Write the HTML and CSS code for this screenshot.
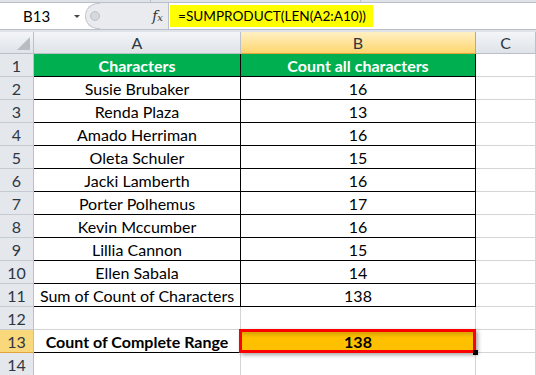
FILE: index.html
```html
<!DOCTYPE html>
<html lang="en">
<head>
    <meta charset="UTF-8">
    <meta name="viewport" content="width=device-width, initial-scale=1.0">
    <title>SUMPRODUCT LEN</title>
    <link rel="stylesheet" href="styles.css">
</head>
<body>
    <div class="top-strip">
        <span class="tick t1"></span>
        <span class="tick t2"></span>
    </div>

    <div class="formula-bar">
        <div class="name-box">
            <span class="name">B13</span>
            <span class="arrow"></span>
        </div>
        <div class="grip"><span class="knob"></span></div>
        <div class="fx-area"><span class="fx">f<small>x</small></span></div>
        <div class="input">
            <span class="formula">=SUMPRODUCT(LEN(A2:A10))</span>
        </div>
    </div>
    <div class="gap"></div>

    <div class="sheet">
        <!-- column headers -->
        <div class="corner"><span class="tri"></span></div>
        <div class="col-head">A</div>
        <div class="col-head active">B</div>
        <div class="col-head last">C</div>

        <div class="row-head">1</div>
        <div class="cell title box">Characters</div>
        <div class="cell title box">Count all characters</div>
        <div class="cell"></div>

        <div class="row-head">2</div>
        <div class="cell box">Susie Brubaker</div>
        <div class="cell box">16</div>
        <div class="cell"></div>

        <div class="row-head">3</div>
        <div class="cell box">Renda Plaza</div>
        <div class="cell box">13</div>
        <div class="cell"></div>

        <div class="row-head">4</div>
        <div class="cell box">Amado Herriman</div>
        <div class="cell box">16</div>
        <div class="cell"></div>

        <div class="row-head">5</div>
        <div class="cell box">Oleta Schuler</div>
        <div class="cell box">15</div>
        <div class="cell"></div>

        <div class="row-head">6</div>
        <div class="cell box">Jacki Lamberth</div>
        <div class="cell box">16</div>
        <div class="cell"></div>

        <div class="row-head">7</div>
        <div class="cell box">Porter Polhemus</div>
        <div class="cell box">17</div>
        <div class="cell"></div>

        <div class="row-head">8</div>
        <div class="cell box">Kevin Mccumber</div>
        <div class="cell box">16</div>
        <div class="cell"></div>

        <div class="row-head">9</div>
        <div class="cell box">Lillia Cannon</div>
        <div class="cell box">15</div>
        <div class="cell"></div>

        <div class="row-head">10</div>
        <div class="cell box">Ellen Sabala</div>
        <div class="cell box">14</div>
        <div class="cell"></div>

        <div class="row-head">11</div>
        <div class="cell box">Sum of Count of Characters</div>
        <div class="cell box">138</div>
        <div class="cell"></div>

        <div class="row-head">12</div>
        <div class="cell"></div>
        <div class="cell"></div>
        <div class="cell"></div>

        <div class="row-head active">13</div>
        <div class="cell bold underline">Count of Complete Range</div>
        <div class="cell bold result">138<span class="selection"><span class="handle"></span></span></div>
        <div class="cell"></div>

        <div class="row-head">14</div>
        <div class="cell"></div>
        <div class="cell"></div>
        <div class="cell"></div>
    </div>
</body>
</html>
```

FILE: styles.css
```css
body {
    margin: 0;
    width: 536px;
    height: 375px;
    overflow: hidden;
    background: #ffffff;
    font-family: Lato, 'Open Sans', Arial, sans-serif;
    font-size: 15px;
    color: #000;
}

/* ribbon edge above the formula bar */
.top-strip {
    height: 2px;
    background: #dfe3e8;
    border-bottom: 1px solid #b9c0c9;
    position: relative;
}

.tick {
    position: absolute;
    top: 0;
    width: 1px;
    height: 3px;
    background: #b9c0c9;
}

.t1 { left: 150px; }
.t2 { left: 360px; }

.formula-bar {
    display: flex;
    height: 26px;
    background: #ffffff;
    border-bottom: 1px solid #b9c0c9;
}

.name-box {
    width: 85px;
    display: flex;
    align-items: center;
    background: #ffffff;
}

.name {
    margin-left: 23px;
    width: 51px;
}

.arrow {
    width: 0;
    height: 0;
    border-left: 3px solid transparent;
    border-right: 3px solid transparent;
    border-top: 3px solid #444;
}

.grip {
    width: 15px;
    background: #e9ebee;
    border: 1px solid #c3c8ce;
    border-right: none;
    border-radius: 13px 0 0 13px;
    display: flex;
    align-items: center;
    justify-content: center;
    box-sizing: border-box;
}

.knob {
    width: 8px;
    height: 8px;
    border-radius: 50%;
    background: #d5d9de;
    border: 1px solid #bcc2c9;
    margin-left: 3px;
}

.fx-area {
    width: 68px;
    background: #e9ebee;
    display: flex;
    align-items: center;
    justify-content: flex-end;
    border-right: 1px solid #b9c0c9;
}

.fx {
    font-family: 'DejaVu Serif', 'Liberation Serif', serif;
    font-style: italic;
    font-size: 14px;
    color: #333;
    margin-right: 5px;
}

.fx small {
    font-size: 10px;
}

.input {
    flex: 1;
    display: flex;
    align-items: center;
    padding-left: 1px;
}

.formula {
    background: #ffff00;
    height: 22px;
    line-height: 22px;
    width: 195px;
    padding-left: 8px;
    font-size: 13.6px;
}

.gap {
    height: 2px;
    background: #dfe3e8;
}

.sheet {
    display: grid;
    grid-template-columns: 34px 207px 235px 1fr;
    grid-template-rows: 22px repeat(14, 23px);
    font-size: 16px;
}

.corner,
.col-head,
.row-head {
    background: linear-gradient(#f3f5f8, #dfe3e8);
    border-right: 1px solid #b9c0c9;
    border-bottom: 1px solid #b9c0c9;
    color: #2d3643;
    display: flex;
    align-items: center;
    justify-content: center;
    box-sizing: border-box;
}

.row-head {
    background: #e4e7ec;
    border-bottom-color: #c6cbd2;
}

.corner {
    position: relative;
}

.tri {
    position: absolute;
    right: 3px;
    bottom: 3px;
    width: 0;
    height: 0;
    border-left: 13px solid transparent;
    border-bottom: 13px solid #b8bdc4;
}

.col-head.active {
    background: linear-gradient(#fff0c4, #ffd66f);
    border-right-color: #e3a33d;
    border-bottom-color: #e3a33d;
}

.row-head.active {
    background: #f9d77b;
    border-bottom-color: #e3a33d;
}

.cell {
    border-right: 1px solid #d4d4d4;
    border-bottom: 1px solid #d4d4d4;
    box-sizing: border-box;
    display: flex;
    align-items: center;
    justify-content: center;
    white-space: nowrap;
}

.cell.box {
    border-right-color: #000;
    border-bottom-color: #000;
}

.cell.title {
    background: #00b050;
    color: #ffffff;
    font-weight: bold;
}

.bold {
    font-weight: bold;
}

.cell.underline {
    border-bottom-color: #000;
}

.cell.result {
    background: linear-gradient(#c99a00, #ffc000 35%);
    position: relative;
}

.selection {
    position: absolute;
    left: -2px;
    top: -1px;
    right: -1px;
    bottom: -1px;
    border: 3px solid #ff0000;
    box-shadow: 2px 2px 4px rgba(0, 0, 0, 0.35);
}

.handle {
    position: absolute;
    right: -5px;
    bottom: -5px;
    width: 5px;
    height: 5px;
    background: #000;
}
```
